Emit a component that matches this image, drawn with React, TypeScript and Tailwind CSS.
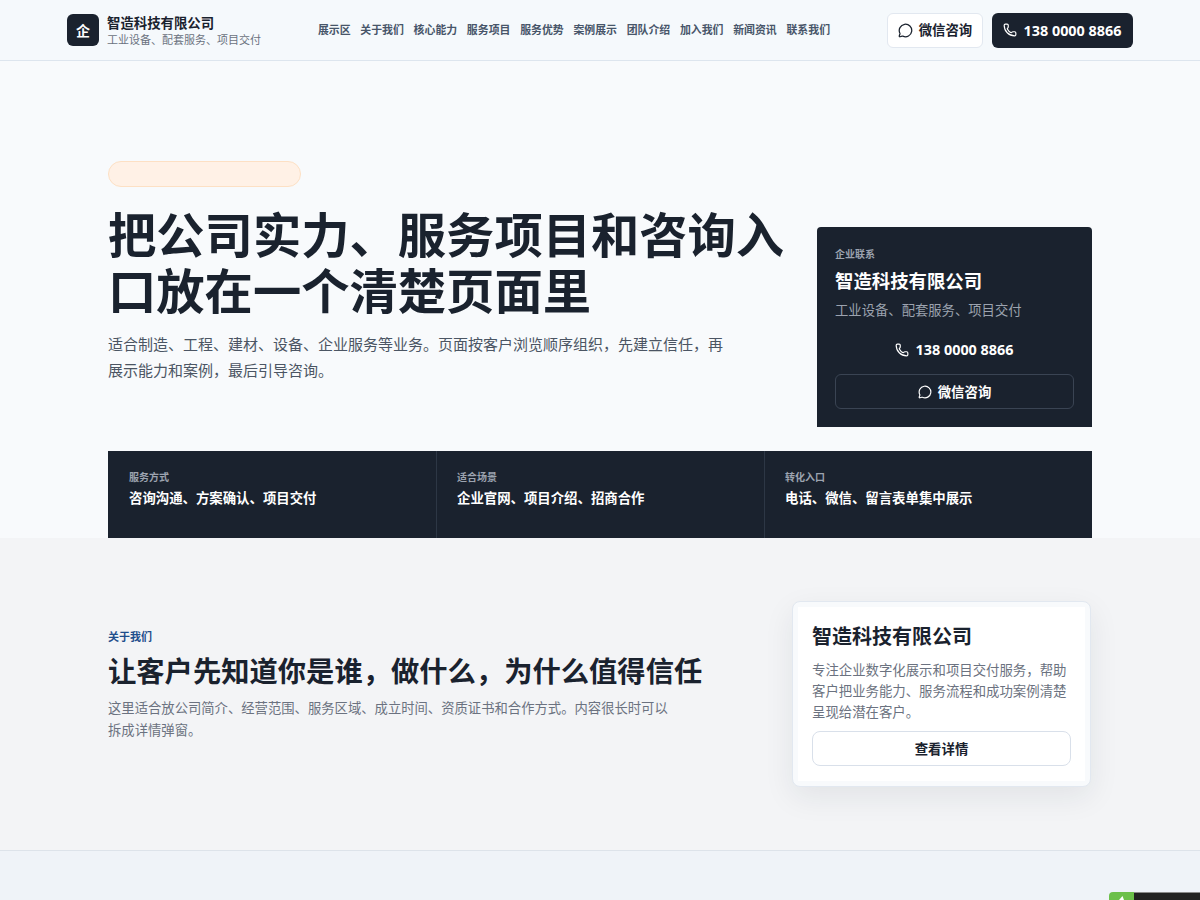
import React from "react";
import { MessageCircle, Phone } from "lucide-react";

const nav = ["展示区", "关于我们", "核心能力", "服务项目", "服务优势", "案例展示", "团队介绍", "加入我们", "新闻资讯", "联系我们"];
const strip = [
  ["服务方式", "咨询沟通、方案确认、项目交付"],
  ["适合场景", "企业官网、项目介绍、招商合作"],
  ["转化入口", "电话、微信、留言表单集中展示"],
];

export default function App() {
  return (
    <div className="h-[900px] overflow-hidden bg-[#f8fafc] text-[#1a222e] font-['Noto_Sans','Noto_Sans_CJK_SC',sans-serif]">
      <header className="h-[61px] border-b border-[#dde5ee] bg-[#f5f9fc] px-[67px] flex items-center justify-between">
        <div className="flex items-center gap-[8px]">
          <div className="w-8 h-8 rounded-[6px] bg-[#1a222e] text-white flex items-center justify-center text-[14px] font-bold">企</div>
          <div className="flex flex-col pt-[2px]">
            <span className="text-[13.4px] leading-[17px] font-semibold">智造科技有限公司</span>
            <span className="mt-[1px] text-[11px] leading-[14px] text-[#6b7280]">工业设备、配套服务、项目交付</span>
          </div>
        </div>
        <nav className="flex items-center gap-[9.7px] text-[10.9px] font-semibold text-[#475569]">
          {nav.map((n) => <span key={n}>{n}</span>)}
        </nav>
        <div className="flex items-center gap-[9px]">
          <button className="h-[35px] w-[96px] rounded-[6px] border border-[#e2e8f0] bg-white flex items-center justify-center gap-[6px] text-[13.4px] font-semibold text-[#1a222e]">
            <MessageCircle size={15} /><span className="pt-[1px]">微信咨询</span>
          </button>
          <button className="h-[35px] w-[141px] rounded-[6px] bg-[#1a222e] flex items-center justify-center gap-[6px] text-[14.4px] font-bold text-white">
            <Phone size={14} /><span className="pt-[1px]">138 0000 8866</span>
          </button>
        </div>
      </header>

      <section className="h-[477px] flex flex-col px-[108px] pt-[100px]">
        <div className="flex items-end justify-between h-[266px]">
          <div className="h-full w-[680px]">
            <div className="w-[193px] h-[26px] rounded-full border border-[#fde0c4] bg-[#fff1e6]" />
            <h1 className="mt-[19px] text-[48.3px] leading-[56px] font-bold tracking-normal">把公司实力、服务项目和咨询入口放在一个清楚页面里</h1>
            <p className="mt-[13px] w-[620px] text-[15px] leading-[26px] text-[#4b5563]">适合制造、工程、建材、设备、企业服务等业务。页面按客户浏览顺序组织，先建立信任，再展示能力和案例，最后引导咨询。</p>
          </div>
          <aside className="w-[275px] h-[200px] rounded-t-[4px] bg-[#1a222e] px-[18px] pt-[20px] text-white">
            <div className="text-[10px] leading-[14px] font-semibold text-[#9ca3af]">企业联系</div>
            <div className="mt-[7px] text-[18.4px] leading-[26px] font-bold">智造科技有限公司</div>
            <div className="mt-[6px] text-[13.33px] leading-[20px] text-[#9ca3af]">工业设备、配套服务、项目交付</div>
            <div className="mt-[20px] flex items-center justify-center gap-[6px] text-[14.4px] leading-[20px] font-bold">
              <Phone size={14} />138 0000 8866
            </div>
            <button className="mt-[14px] w-full h-[35px] rounded-[6px] border border-[#3a4453] flex items-center justify-center gap-[6px] text-[13.4px] font-semibold">
              <MessageCircle size={14} /><span className="pt-[2px]">微信咨询</span>
            </button>
          </aside>
        </div>
        <div className="mt-[24px] h-[87px] grid grid-cols-3 bg-[#1a222e] text-white">
          {strip.map(([a, b], i) => (
            <div key={a} className={`pr-[20px] pt-[19px] ${i > 0 ? "pl-[20px] border-l border-[#2d3745]" : "pl-[21px]"}`}>
              <div className="text-[10px] leading-[14px] font-semibold text-[#9ca3af]">{a}</div>
              <div className="mt-[4px] text-[13.4px] leading-[20px] font-semibold">{b}</div>
            </div>
          ))}
        </div>
      </section>

      <section className="h-[313px] bg-[#f3f4f6] border-b border-[#dde3ea] px-[108px] pt-[63px] flex justify-between">
        <div className="w-[580px] pt-[28px]">
          <div className="text-[11px] leading-[16px] font-semibold text-[#1e4e8c]">关于我们</div>
          <h2 className="mt-[6px] w-[620px] text-[28.3px] leading-[40px] font-bold whitespace-nowrap">让客户先知道你是谁，做什么，为什么值得信任</h2>
          <p className="mt-[6px] w-[570px] text-[13.33px] leading-[22px] text-[#6b7280]">这里适合放公司简介、经营范围、服务区域、成立时间、资质证书和合作方式。内容很长时可以拆成详情弹窗。</p>
        </div>
        <div className="w-[299px] h-[186px] mr-px rounded-[8px] border border-[#e2e8f0] bg-[#f8fafc] p-[5px] shadow-[0_10px_30px_rgba(24,33,45,0.08)]">
          <div className="h-full bg-white px-[14px] pt-[15px]">
            <div className="text-[20px] leading-[30px] font-bold">智造科技有限公司</div>
            <p className="mt-[8px] text-[13.4px] leading-[21px] text-[#6b7280]">专注企业数字化展示和项目交付服务，帮助客户把业务能力、服务流程和成功案例清楚呈现给潜在客户。</p>
            <button className="mt-[8px] w-full h-[35px] pt-[2px] rounded-[8px] border border-[#d9e0ea] bg-white text-[13.4px] font-semibold text-[#1a222e]">查看详情</button>
          </div>
        </div>
      </section>

      <section className="h-[49px] bg-[#eff3f8]" />

      <div className="fixed left-[1109px] top-[892px] w-[91px] h-[8px] flex">
        <div className="relative w-[25px] h-full rounded-tl-[4px] bg-[#6cc04a] overflow-hidden">
          <svg viewBox="0 0 25 8" className="absolute inset-0 w-full h-full"><path d="M10 8 L13.5 4 L15 8 Z" fill="#ffffff" /></svg>
        </div>
        <div className="flex-1 h-full bg-[#222222] border-t border-[#8a8a8a]" />
      </div>
    </div>
  );
}
